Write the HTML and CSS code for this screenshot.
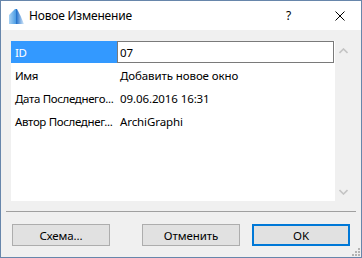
FILE: index.html
```html
<!DOCTYPE html>
<html>
<head>
<meta charset="utf-8">
<link rel="stylesheet" href="styles.css">
</head>
<body>
<div class="win">
  <div class="titlebar">
    <svg class="appicon" width="15" height="15" viewBox="0 0 15 15">
      <defs>
        <linearGradient id="g1" x1="0" y1="0" x2="1" y2="0">
          <stop offset="0" stop-color="#a9d3f5"/>
          <stop offset="1" stop-color="#4a9be3"/>
        </linearGradient>
        <linearGradient id="g2" x1="0" y1="0" x2="1" y2="0">
          <stop offset="0" stop-color="#1d6cc8"/>
          <stop offset="1" stop-color="#d9ecfc"/>
        </linearGradient>
      </defs>
      <path d="M0 15 L0 6 L6 0 L7 0 L7 15 Z" fill="url(#g1)"/>
      <path d="M7 0 L8 0 Q12 7 15 15 L7 15 Z" fill="url(#g2)"/>
    </svg>
    <span class="title">Новое Изменение</span>
    <span class="help">?</span>
    <svg class="close" width="10" height="10" viewBox="0 0 10 10">
      <path d="M0.5 0.5 L9.5 9.5 M9.5 0.5 L0.5 9.5" stroke="#000" stroke-width="1"/>
    </svg>
  </div>
  <div class="body">
    <div class="listrow">
      <div class="list">
        <div class="row">
          <div class="key sel">ID</div>
          <div class="val edit">07</div>
        </div>
        <div class="row">
          <div class="key">Имя</div>
          <div class="val">Добавить новое окно</div>
        </div>
        <div class="row">
          <div class="key">Дата Последнего...</div>
          <div class="val">09.06.2016 16:31</div>
        </div>
        <div class="row">
          <div class="key">Автор Последнег...</div>
          <div class="val">ArchiGraphi</div>
        </div>
      </div>
      <div class="scroll">
        <svg width="9" height="6" viewBox="0 0 9 6"><path d="M0.5 5 L4.5 1 L8.5 5" fill="none" stroke="#c4c4c4" stroke-width="1.6"/></svg>
        <svg width="9" height="6" viewBox="0 0 9 6"><path d="M0.5 1 L4.5 5 L8.5 1" fill="none" stroke="#c4c4c4" stroke-width="1.6"/></svg>
      </div>
    </div>
    <div class="sep"></div>
    <div class="buttons">
      <div class="btn">Схема...</div>
      <div class="btn second">Отменить</div>
      <div class="btn ok">OK</div>
    </div>
    <div class="grip">
      <svg width="8" height="8" viewBox="0 0 8 8" fill="#b4b4b4">
        <rect x="6" y="0" width="2" height="2"/>
        <rect x="3" y="3" width="2" height="2"/><rect x="6" y="3" width="2" height="2"/>
        <rect x="0" y="6" width="2" height="2"/><rect x="3" y="6" width="2" height="2"/><rect x="6" y="6" width="2" height="2"/>
      </svg>
    </div>
  </div>
</div>
</body>
</html>
```

FILE: styles.css
```css
* { box-sizing: border-box; }
html, body { margin: 0; padding: 0; background: #fff; }
body {
  font-family: "Noto Sans", "Open Sans", sans-serif;
  font-size: 11.5px;
  letter-spacing: -0.1px;
  color: #000;
}
.win {
  width: 362px;
  height: 258px;
  border: 1px solid #6786ab;
  display: flex;
  flex-direction: column;
  background: #f0f0f0;
}
.titlebar {
  height: 29px;
  background: #fff;
  display: flex;
  align-items: center;
  flex: none;
}
.appicon { margin-left: 8px; margin-top: 1px; }
.title { margin-left: 5px; font-size: 12px; letter-spacing: -0.2px; flex: 1; }
.help { margin-right: 44px; font-size: 12px; }
.close { margin-right: 16px; }
.body {
  flex: 1;
  display: flex;
  flex-direction: column;
  padding-top: 11px;
  position: relative;
}
.listrow {
  display: flex;
  margin-left: 10px;
  height: 160px;
}
.list {
  width: 324px;
  background: #fff;
}
.scroll {
  width: 14px;
  display: flex;
  flex-direction: column;
  justify-content: space-between;
  align-items: center;
  padding: 7px 0 6px 2px;
}
.row {
  display: flex;
  height: 23px;
  align-items: stretch;
}
.row:first-child { height: 22px; }
.key {
  width: 106px;
  padding-left: 4px;
  white-space: nowrap;
  letter-spacing: -0.35px;
  display: flex;
  align-items: center;
  padding-top: 1px;
}
.key.sel { background: #3399ff; color: #fff; }
.val {
  padding-left: 3px;
  white-space: nowrap;
  display: flex;
  align-items: center;
  padding-top: 1px;
}
.val.edit {
  width: 217px;
  border: 1px solid #7a7a7a;
  padding-left: 2px;
}
.sep {
  margin: 10px 0 0 5px;
  width: 350px;
  height: 1px;
  background: #a0a0a0;
}
.buttons {
  display: flex;
  margin: 12px 0 0 11px;
}
.btn {
  width: 98px;
  height: 22px;
  background: #e1e1e1;
  border: 1px solid #adadad;
  display: flex;
  align-items: center;
  justify-content: center;
}
.btn.second { margin-left: 32px; }
.btn.ok { margin-left: 12px; border: 2px solid #0078d7; }
.grip {
  position: absolute;
  right: 1px;
  bottom: 1px;
  line-height: 0;
}
```
